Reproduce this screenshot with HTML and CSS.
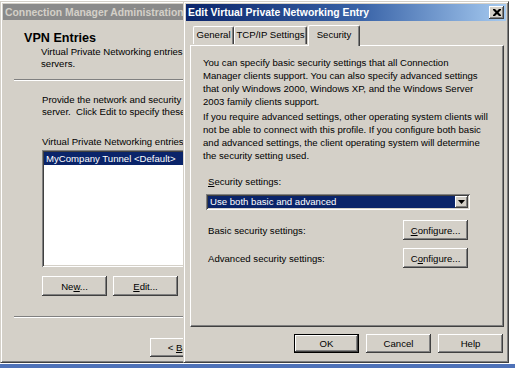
FILE: index.html
```html
<!DOCTYPE html>
<html lang="en">
<head>
    <meta charset="UTF-8">
    <title>Edit Virtual Private Networking Entry</title>
    <link rel="stylesheet" href="styles.css">
</head>
<body>

<div class="desktop">

    <!-- Background wizard window -->
    <div class="window main-window">
        <div class="titlebar inactive">
            <span>Connection Manager Administration Kit</span>
        </div>
        <div class="wizard-head">
            <h1>VPN Entries</h1>
            <p>Virtual Private Networking entries allow users to connect to VPN<br>servers.</p>
        </div>
        <div class="etched"></div>
        <div class="wizard-body">
            <p>Provide the network and security details for connecting to the VPN<br>server.&nbsp; Click Edit to specify these settings.</p>
            <label class="list-label">Virtual Private Networking entries:</label>
            <div class="listbox">
                <div class="list-item selected">MyCompany Tunnel &lt;Default&gt;</div>
            </div>
            <div class="list-buttons">
                <button class="btn">Ne<u>w</u>...</button>
                <button class="btn"><u>E</u>dit...</button>
            </div>
        </div>
        <div class="etched bottom-rule"></div>
        <div class="wizard-nav">
            <button class="btn">&lt; <u>B</u>ack</button>
        </div>
    </div>

    <!-- Front dialog -->
    <div class="window dialog">
        <div class="titlebar">
            <span>Edit Virtual Private Networking Entry</span>
            <button class="close-btn" aria-label="Close">
                <svg width="8" height="7" viewBox="0 0 8 7">
                    <path d="M0 0h2l2 2 2-2h2v1l-2.5 2.5L8 6v1H6L4 5 2 7H0V6l2.5-2.5L0 1z" fill="#000"/>
                </svg>
            </button>
        </div>

        <div class="tabs">
            <div class="tab tab-general">General</div>
            <div class="tab tab-tcp">TCP/IP Settings</div>
            <div class="tab tab-security active">Security</div>
        </div>

        <div class="tab-panel">
            <p>You can specify basic security settings that all Connection<br>Manager clients support. You can also specify advanced settings<br>that only Windows 2000, Windows XP, and the Windows Server<br>2003 family clients support.</p>
            <p>If you require advanced settings, other operating system clients will<br>not be able to connect with this profile. If you configure both basic<br>and advanced settings, the client operating system will determine<br>the security setting used.</p>

            <label class="field-label"><u>S</u>ecurity settings:</label>
            <div class="combo">
                <span class="combo-value">Use both basic and advanced</span>
                <span class="combo-arrow">
                    <svg width="7" height="4" viewBox="0 0 7 4"><path d="M0 0h7L3.5 4z" fill="#000"/></svg>
                </span>
            </div>

            <div class="setting-row first">
                <span>Basic security settings:</span>
                <button class="btn"><u>C</u>onfigure...</button>
            </div>
            <div class="setting-row">
                <span>Advanced security settings:</span>
                <button class="btn">C<u>o</u>nfigure...</button>
            </div>
        </div>

        <div class="dialog-buttons">
            <button class="btn default">OK</button>
            <button class="btn">Cancel</button>
            <button class="btn">Help</button>
        </div>
    </div>

</div>
<div class="taskbar"></div>

</body>
</html>
```

FILE: styles.css
```css
/* Basic Reset */
* {
    box-sizing: border-box;
    margin: 0;
    padding: 0;
}

body {
    font-family: "Liberation Sans", Arial, sans-serif;
    font-size: 9.6px;
    color: #000;
    background-color: #fff;
}

/* Desktop area holding both windows */
.desktop {
    position: relative;
    width: 515px;
    height: 364px;
    overflow: hidden;
}

.taskbar {
    width: 515px;
    height: 4px;
    background-color: #4f72b8;
}

/* Classic window frame */
.window {
    position: absolute;
    top: 1px;
    display: flex;
    flex-direction: column;
    background-color: #d4d0c8;
    border: 1px solid;
    border-color: #d4d0c8 #404040 #404040 #d4d0c8;
    box-shadow: inset 1px 1px #fff, inset -1px -1px #808080;
    padding: 2px;
}

/* only the strip left of the dialog is visible */
.main-window {
    left: 0;
    width: 190px;
    height: 362px;
    overflow: hidden;
}

.dialog {
    left: 183px;
    width: 326px;
    height: 362px;
}

/* Title bars */
.titlebar {
    height: 17px;
    flex-shrink: 0;
    display: flex;
    align-items: center;
    padding: 0 2px 0 2px;
    font-size: 10.4px;
    font-weight: bold;
    color: #fff;
    white-space: nowrap;
    overflow: hidden;
    background: linear-gradient(to right, #0a246a 0%, #3a64a8 55%, #a6caf0 100%);
}

.titlebar.inactive {
    height: 16px;
    color: #d4d0c8;
    background: #8a8a8a;
}

.close-btn {
    margin-left: auto;
    width: 15px;
    height: 13px;
    display: flex;
    align-items: center;
    justify-content: center;
    border: none;
    background-color: #d4d0c8;
    box-shadow: inset -1px -1px #404040, inset 1px 1px #fff, inset -2px -2px #808080;
}

/* Shared push button */
.btn {
    font-family: inherit;
    font-size: 9.6px;
    color: #000;
    height: 20px;
    width: 65px;
    flex-shrink: 0;
    border: none;
    background-color: #d4d0c8;
    box-shadow: inset -1px -1px #404040, inset 1px 1px #fff, inset -2px -2px #808080;
}

.btn.default {
    border: 1px solid #000;
}

/* Etched separator */
.etched {
    height: 2px;
    flex-shrink: 0;
    margin-left: 11px;
    border-top: 1px solid #808080;
    border-bottom: 1px solid #fff;
}

/* Wizard window */
.wizard-head {
    padding: 10px 0 0 21px;
    height: 59px;
    flex-shrink: 0;
    white-space: nowrap;
    overflow: hidden;
}

.wizard-head h1 {
    font-size: 12.6px;
    line-height: 16px;
    font-weight: bold;
}

.wizard-head p {
    margin-left: 17px;
    line-height: 12px;
}

.wizard-body {
    padding: 13px 0 0 39px;
    white-space: nowrap;
    overflow: hidden;
    flex-shrink: 0;
    display: flex;
    flex-direction: column;
    align-items: flex-start;
}

.wizard-body p {
    line-height: 12px;
}

.list-label {
    margin-top: 18px;
    line-height: 12px;
}

.listbox {
    margin-top: 2px;
    width: 220px;
    height: 117px;
    padding: 2px;
    background-color: #fff;
    box-shadow: inset 1px 1px #808080, inset -1px -1px #fff, inset 2px 2px #404040, inset -2px -2px #d4d0c8;
}

.list-item {
    height: 13px;
    line-height: 13px;
    padding-left: 2px;
}

.list-item.selected {
    background-color: #0a246a;
    color: #fff;
}

.list-buttons {
    margin-top: 9px;
    display: flex;
    gap: 6px;
}

.bottom-rule {
    margin-top: 20px;
}

.wizard-nav {
    padding: 20px 0 0 147px;
    display: flex;
}

.wizard-nav .btn {
    height: 19px;
}

/* Tabs */
.tabs {
    margin-top: 4px;
    height: 20px;
    display: flex;
    align-items: flex-end;
    padding-left: 7px;
    position: relative;
    z-index: 1;
}

.tab {
    height: 18px;
    line-height: 16px;
    text-align: center;
    border-top: 1px solid #fff;
    border-left: 1px solid #fff;
    border-right: 1px solid #404040;
    border-radius: 2px 2px 0 0;
    box-shadow: inset -1px 0 #808080;
    margin-bottom: 1px;
}

.tab-general {
    width: 41px;
}

.tab-tcp {
    width: 73px;
}

.tab.active {
    width: 52px;
    height: 21px;
    line-height: 18px;
    margin: 0 0 -1px 1px;
    background-color: #d4d0c8;
}

.tab-panel {
    margin: 0 2px 0 4px;
    height: 282px;
    padding: 10px 12px 0 12px;
    border: 1px solid;
    border-color: #fff #404040 #404040 #fff;
    box-shadow: inset -1px -1px #808080;
    white-space: nowrap;
    display: flex;
    flex-direction: column;
    align-items: flex-start;
}

.tab-panel p {
    line-height: 13px;
    margin-bottom: 2px;
}

.field-label {
    margin: 12px 0 0 5px;
    line-height: 12px;
}

.combo {
    margin: 6px 0 0 3px;
    width: 264px;
    height: 16px;
    padding: 2px;
    display: flex;
    background-color: #fff;
    box-shadow: inset 1px 1px #808080, inset -1px -1px #fff, inset 2px 2px #404040, inset -2px -2px #d4d0c8;
}

.combo-value {
    flex: 1;
    background-color: #0a246a;
    color: #fff;
    line-height: 12px;
    padding-left: 2px;
}

.combo-arrow {
    width: 13px;
    display: flex;
    align-items: center;
    justify-content: center;
    background-color: #d4d0c8;
    box-shadow: inset -1px -1px #404040, inset 1px 1px #fff, inset -2px -2px #808080;
}

.setting-row {
    width: 260px;
    margin: 8px 0 0 5px;
    display: flex;
    justify-content: space-between;
    align-items: center;
}

.setting-row.first {
    margin-top: 10px;
}

/* Bottom buttons */
.dialog-buttons {
    margin-top: 7px;
    padding-right: 3px;
    display: flex;
    justify-content: flex-end;
    gap: 7px;
}

.dialog-buttons .btn {
    height: 19px;
}
```
